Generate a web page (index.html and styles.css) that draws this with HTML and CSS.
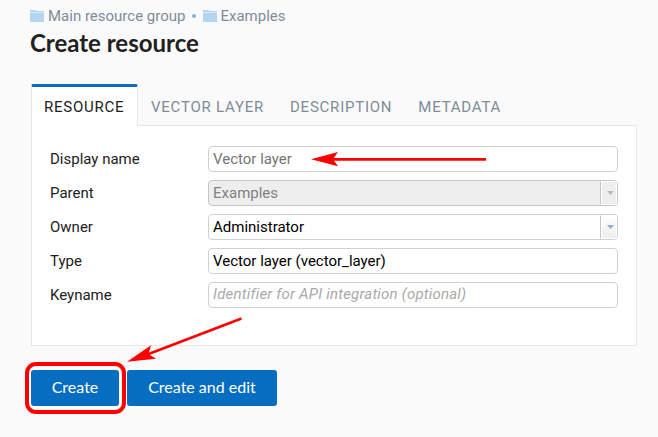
FILE: index.html
```html
<!DOCTYPE html>
<html lang="en">
<head>
<meta charset="utf-8">
<title>Create resource</title>
<link rel="stylesheet" href="styles.css">
</head>
<body>
<nav class="crumbs">
  <a class="crumb"><svg class="folder" width="14" height="12" viewBox="0 0 14 12"><path fill="#b3d5ef" d="M0 0h5l1.500 1H14v11H0z"/><path fill="#d9eaf7" d="M0 2h14v1H0z"/></svg><span>Main resource group</span></a>
  <i class="dot"></i>
  <a class="crumb"><svg class="folder" width="14" height="12" viewBox="0 0 14 12"><path fill="#b3d5ef" d="M0 0h5l1.500 1H14v11H0z"/><path fill="#d9eaf7" d="M0 2h14v1H0z"/></svg><span>Examples</span></a>
</nav>
<h1>Create resource</h1>
<div class="tabs">
  <div class="tab active"><span>RESOURCE</span></div>
  <div class="tab"><span>VECTOR LAYER</span></div>
  <div class="tab"><span>DESCRIPTION</span></div>
  <div class="tab"><span>METADATA</span></div>
</div>
<main class="panel">
  <div class="row"><label>Display name</label><div class="field"><span class="muted">Vector layer</span></div></div>
  <div class="row"><label>Parent</label><div class="field disabled"><span>Examples</span><b class="drop"><svg width="7" height="4" viewBox="0 0 7 4"><path d="M0 0h7L3.500 4z"/></svg></b></div></div>
  <div class="row"><label>Owner</label><div class="field"><span>Administrator</span><b class="drop"><svg width="7" height="4" viewBox="0 0 7 4"><path d="M0 0h7L3.500 4z"/></svg></b></div></div>
  <div class="row"><label>Type</label><div class="field"><span>Vector layer (vector_layer)</span></div></div>
  <div class="row"><label>Keyname</label><div class="field"><span class="hint">Identifier for API integration (optional)</span></div></div>
</main>
<div class="actions">
  <button class="create">Create</button>
  <button class="edit">Create and edit</button>
</div>
<svg class="marks" width="658" height="437" viewBox="0 0 658 437">
  <path d="M330 159.300H486" stroke="#f00" stroke-width="2.700"/>
  <path fill="#f00" d="M311 159.300L338 152l-5 7.300 5 6.900z"/>
  <path d="M146 355L241.500 318.500" stroke="#f00" stroke-width="2.500"/>
  <path fill="#f00" d="M127 361.800L151 345.200l-2.500 8.800 7.500 4.800z"/>
  <rect x="27" y="364" width="97" height="48" rx="9" fill="none" stroke="#f00" stroke-width="4"/>
</svg>
</body>
</html>
```
FILE: styles.css
```css
* { box-sizing: border-box; }
body { margin: 0; height: 437px; padding: 6px 21px 0 31px; background: #fafafa; font: 15px/20px Roboto, sans-serif; color: #212121; overflow: hidden; }
.crumbs { display: flex; align-items: center; height: 20px; margin-left: -1px; color: #7f8c98; }
.crumb { display: flex; align-items: center; gap: 4px; }
.crumb:last-child { gap: 3px; }
.dot { width: 4px; height: 4px; border-radius: 50%; background: #7db7e3; margin: 0 7px; }
h1 { margin: 1px 0 0 -1px; font: bold 24px/32px Lato, sans-serif; letter-spacing: 0; }
.tabs { display: flex; height: 41px; margin-top: 25px; }
.tab { padding: 13px 13px 0; color: #7f8c98; letter-spacing: 0.77px; white-space: nowrap; }
.tab.active { position: relative; width: 107px; height: 42px; padding: 10px 12px 0; background: #fff; border: solid #e6e6e6; border-width: 3px 1px 0; border-top: 3px solid #066dc0; border-radius: 2px 2px 0 0; color: #212121; z-index: 1; }
.panel { height: 221px; padding: 20px 18px; background: #fff; border: 1px solid #e6e6e6; display: flex; flex-direction: column; gap: 8px; }
.row { display: flex; height: 26px; align-items: center; }
label { width: 158px; }
.field { flex: 1; height: 26px; display: flex; align-items: center; justify-content: space-between; padding-left: 4px; background: #fff; border: 1px solid #d0d0d0; border-radius: 4px; color: #000; overflow: hidden; }
.muted { color: #757575; }
.hint { color: #a9a9a9; font-style: italic; letter-spacing: 0.2px; position: relative; top: -1px; }
.disabled { background: #eee; border-color: #c5c5c5; color: #818181; }
.drop { width: 17px; height: 24px; border: 1px solid #fff; border-left: 1px solid #c5c5c5; box-shadow: inset 1px 0 #fff; background: linear-gradient(#fff, #eee); display: flex; align-items: center; justify-content: center; padding-left: 3px; fill: #94acd2; }
.disabled .drop { background: #eee; fill: #b9b9b9; }
.actions { display: flex; gap: 8px; margin-top: 24px; }
button { height: 36px; padding: 0 0 2px; border: 0; border-radius: 3px; background: #066dc0; color: #fff; font: 16px/20px Lato, sans-serif; }
.create { width: 88px; }
.edit { width: 150px; }
.marks { position: absolute; left: 0; top: 0; }
```
